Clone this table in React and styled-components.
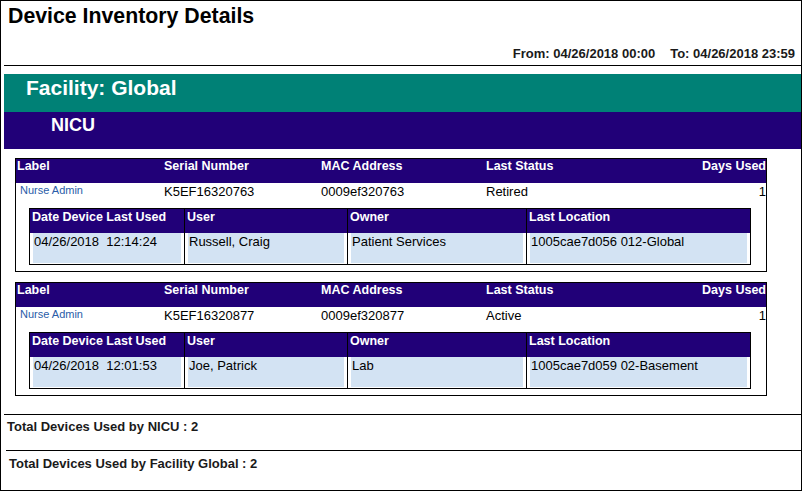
import React from "react";
import styled, { createGlobalStyle } from "styled-components";

const PURPLE = "#210078";
const TEAL = "#008176";
const CELL_BLUE = "#d3e3f3";

const GlobalStyle = createGlobalStyle`
  body {
    margin: 0;
    background: #fff;
    font-family: "Liberation Sans", Arial, sans-serif;
    color: #000;
  }
`;

const Frame = styled.div`
  width: 802px;
  height: 491px;
  box-sizing: border-box;
  border: 1px solid #000;
  overflow: hidden;
`;

const Title = styled.h1`
  margin: 0;
  padding: 3px 0 0 7px;
  font-size: 21.3px;
  line-height: 24px;
  font-weight: bold;
`;

const DateRange = styled.div`
  display: flex;
  justify-content: flex-end;
  gap: 15px;
  margin-top: 18px;
  padding-right: 6px;
  font-size: 13px;
  line-height: 15px;
  font-weight: bold;
  color: #1a1a1a;
`;

const Rule = styled.div`
  margin: 4px 0 0 3px;
  border-top: 1px solid #000;
`;

const FacilityBar = styled.div`
  margin: 8px 0 0 3px;
  height: 38px;
  box-sizing: border-box;
  padding: 2px 0 0 22px;
  background: ${TEAL};
  color: #fff;
  font-size: 21px;
  line-height: 24px;
  font-weight: bold;
`;

const UnitBar = styled.div`
  margin-left: 3px;
  height: 37px;
  box-sizing: border-box;
  padding: 2.5px 0 0 47px;
  background: ${PURPLE};
  color: #fff;
  font-size: 18px;
  line-height: 21px;
  font-weight: bold;
`;

const CardList = styled.div`
  display: flex;
  flex-direction: column;
  gap: 10px;
  padding: 9px 0 0 14px;
`;

const Card = styled.div`
  width: 752px;
  box-sizing: border-box;
  border: 1px solid #000;
`;

const deviceColumns = "147px 157px 165px 1fr 1fr";

const CardHeader = styled.div`
  display: grid;
  grid-template-columns: ${deviceColumns};
  height: 24px;
  background: ${PURPLE};
  color: #fff;
  font-size: 12.5px;
  line-height: 15px;
  font-weight: bold;
`;

const CardRow = styled.div`
  display: grid;
  grid-template-columns: ${deviceColumns};
  align-items: start;
  height: 17px;
  box-sizing: border-box;
  padding-top: 1px;
  font-size: 13px;
  line-height: 15px;
`;

const Cell = styled.div`
  padding-left: 1px;
  text-align: ${(p) => (p.$right ? "right" : "left")};
  white-space: nowrap;
`;

const LabelLink = styled.div`
  padding-left: 4px;
  font-size: 11px;
  line-height: 13px;
  color: #2a5ca8;
`;

const Detail = styled.div`
  padding: 8px 15px 6px 13px;
`;

const usageColumns = "154px 163px 179px 1fr";

const UsageTable = styled.div`
  display: grid;
  grid-template-columns: ${usageColumns};
  border: 1px solid #000;
`;

const UsageHead = styled.div`
  height: 24px;
  box-sizing: border-box;
  padding: 1px 0 0 2px;
  background: ${PURPLE};
  border-left: ${(p) => (p.$divider ? "1px solid #000" : "none")};
  color: #fff;
  font-size: 12.5px;
  line-height: 15px;
  font-weight: bold;
  white-space: nowrap;
`;

const UsageCell = styled.div`
  height: 31px;
  box-sizing: border-box;
  padding: 0 3px 1px 3px;
  background: #fff;
  border-left: ${(p) => (p.$divider ? "1px solid #000" : "none")};
  display: flex;
`;

const UsageValue = styled.div`
  flex: 1;
  padding: 1px 0 0 1px;
  background: ${CELL_BLUE};
  font-size: 13px;
  line-height: 15px;
  white-space: pre;
`;

const Total = styled.div`
  margin: ${(p) => p.$top}px 0 0 ${(p) => p.$indent}px;
  padding: ${(p) => p.$pad}px 0 0 3px;
  border-top: 1px solid #000;
  font-size: 13px;
  line-height: 15px;
  font-weight: bold;
  color: #1a1a1a;
`;

const devices = [
  {
    label: "Nurse Admin",
    serial: "K5EF16320763",
    mac: "0009ef320763",
    status: "Retired",
    days: 1,
    lastUsed: "04/26/2018  12:14:24",
    user: "Russell, Craig",
    owner: "Patient Services",
    location: "1005cae7d056 012-Global",
  },
  {
    label: "Nurse Admin",
    serial: "K5EF16320877",
    mac: "0009ef320877",
    status: "Active",
    days: 1,
    lastUsed: "04/26/2018  12:01:53",
    user: "Joe, Patrick",
    owner: "Lab",
    location: "1005cae7d059 02-Basement",
  },
];

const usageHeads = ["Date Device Last Used", "User", "Owner", "Last Location"];

const DeviceCard = ({ device }) => {
  const values = [device.lastUsed, device.user, device.owner, device.location];
  return (
    <Card>
      <CardHeader>
        <Cell>Label</Cell>
        <Cell>Serial Number</Cell>
        <Cell>MAC Address</Cell>
        <Cell>Last Status</Cell>
        <Cell $right>Days Used</Cell>
      </CardHeader>
      <CardRow>
        <LabelLink>{device.label}</LabelLink>
        <Cell>{device.serial}</Cell>
        <Cell>{device.mac}</Cell>
        <Cell>{device.status}</Cell>
        <Cell $right>{device.days}</Cell>
      </CardRow>
      <Detail>
        <UsageTable>
          {usageHeads.map((h, i) => (
            <UsageHead key={h} $divider={i > 0}>
              {h}
            </UsageHead>
          ))}
          {values.map((v, i) => (
            <UsageCell key={i} $divider={i > 0}>
              <UsageValue>{v}</UsageValue>
            </UsageCell>
          ))}
        </UsageTable>
      </Detail>
    </Card>
  );
};

const App = () => {
  return (
    <>
      <GlobalStyle />
      <Frame>
        <Title>Device Inventory Details</Title>
        <DateRange>
          <span>From: 04/26/2018 00:00</span>
          <span>To: 04/26/2018 23:59</span>
        </DateRange>
        <Rule />
        <FacilityBar>Facility: Global</FacilityBar>
        <UnitBar>NICU</UnitBar>
        <CardList>
          {devices.map((d) => (
            <DeviceCard key={d.serial} device={d} />
          ))}
        </CardList>
        <Total $top={18} $indent={3} $pad={4}>
          Total Devices Used by NICU : 2
        </Total>
        <Total $top={16} $indent={5} $pad={5}>
          Total Devices Used by Facility Global : 2
        </Total>
      </Frame>
    </>
  );
};

export default App;
